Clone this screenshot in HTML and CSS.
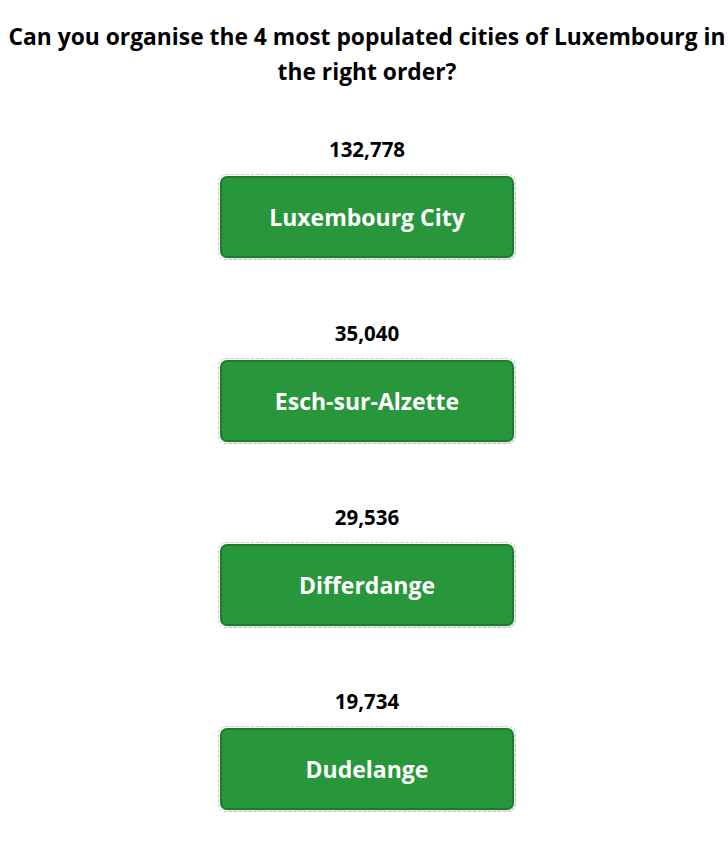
FILE: index.html
```html
<!DOCTYPE html>
<html>
<head>
<meta charset="utf-8">
<link rel="stylesheet" href="styles.css">
</head>
<body>
<main class="quiz">
  <h1 class="title">Can you organise the 4 most populated cities of Luxembourg in the right order?</h1>
  <ol class="list">
    <li class="item">
      <div class="count">132,778</div>
      <div class="slot"><div class="city">Luxembourg City</div></div>
    </li>
    <li class="item">
      <div class="count">35,040</div>
      <div class="slot"><div class="city">Esch-sur-Alzette</div></div>
    </li>
    <li class="item">
      <div class="count">29,536</div>
      <div class="slot"><div class="city">Differdange</div></div>
    </li>
    <li class="item">
      <div class="count">19,734</div>
      <div class="slot"><div class="city">Dudelange</div></div>
    </li>
  </ol>
</main>
</body>
</html>
```
FILE: styles.css
```css
html, body {
  margin: 0;
  padding: 0;
  background: #ffffff;
}
body {
  font-family: "Open Sans", "Noto Sans", sans-serif;
  color: #000;
}
.quiz {
  padding: 19px 2px 0 8px;
  display: flex;
  flex-direction: column;
  align-items: center;
}
.title {
  margin: 0;
  font-size: 22.8px;
  line-height: 35px;
  font-weight: 700;
  text-align: center;
}
.list {
  list-style: none;
  margin: 47px 0 0 0;
  padding: 0;
  display: flex;
  flex-direction: column;
  align-items: center;
  gap: 60px;
}
.item {
  display: flex;
  flex-direction: column;
  align-items: center;
  gap: 12px;
}
.count {
  font-size: 20.5px;
  line-height: 26px;
  font-weight: 700;
}
.slot {
  width: 294px;
  height: 82px;
  border: 1px dashed #c8c8c8;
  border-radius: 8px;
  padding: 1px;
  box-sizing: content-box;
  display: flex;
}
.city {
  flex: 1;
  display: flex;
  align-items: center;
  justify-content: center;
  background: #28963a;
  border: 2px solid #1e7a2c;
  border-radius: 7px;
  color: #fff;
  font-size: 23px;
  font-weight: 700;
  box-shadow: 1px 1px 2px rgba(0,0,0,0.15);
}
```
